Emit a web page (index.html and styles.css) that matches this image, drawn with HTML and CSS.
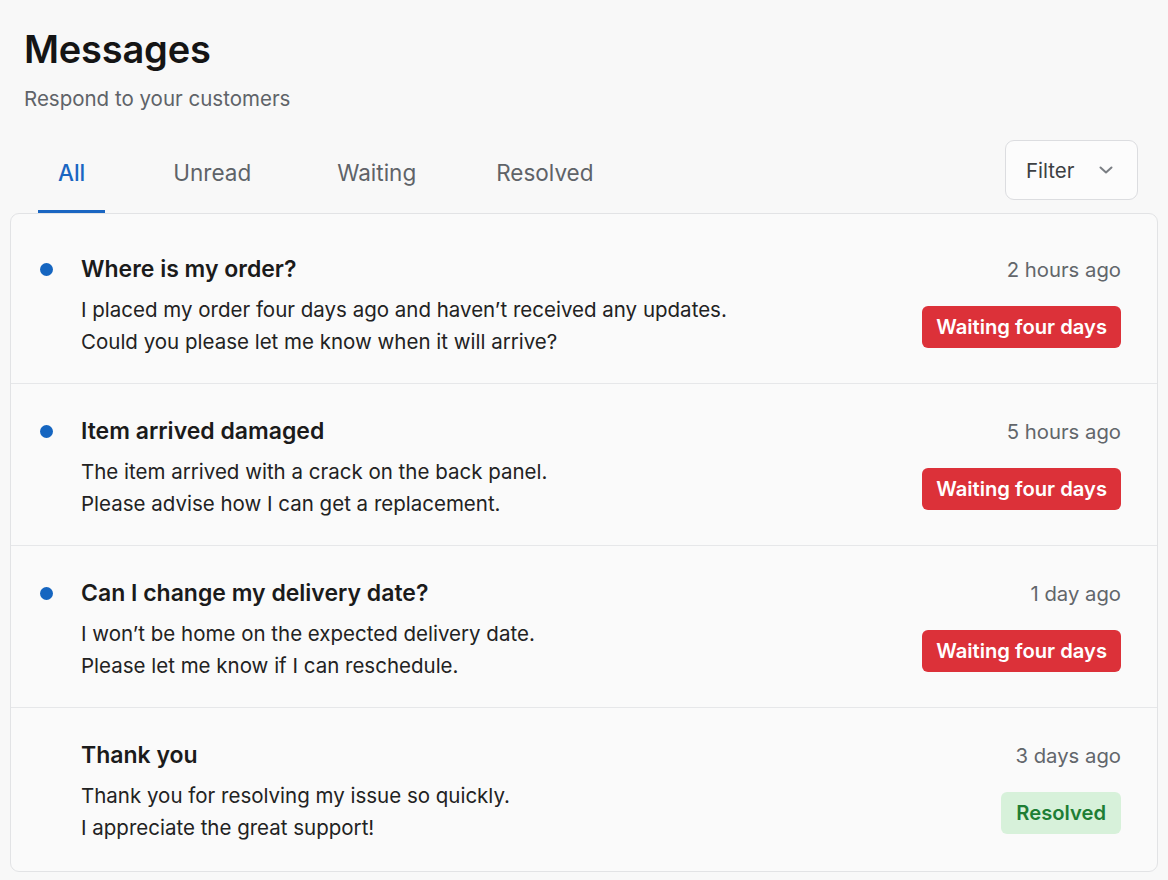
FILE: index.html
```
<!DOCTYPE html>
<html>
<head>
<meta charset="utf-8">
<link rel="stylesheet" href="styles.css">
</head>
<body>
<div class="page">
  <header class="head">
    <h1 class="title">Messages</h1>
    <p class="subtitle">Respond to your customers</p>
  </header>
  <div class="toolbar">
    <nav class="tabs">
      <a class="tab active">All</a>
      <a class="tab">Unread</a>
      <a class="tab">Waiting</a>
      <a class="tab">Resolved</a>
    </nav>
    <button class="filter">Filter
      <svg class="chev" width="16" height="16" viewBox="0 0 16 16"><path d="M2.5 5.5 L8 10.5 L13.5 5.5" fill="none" stroke="#7a7e83" stroke-width="2" stroke-linecap="round" stroke-linejoin="round"/></svg>
    </button>
  </div>
  <div class="card">
    <div class="row">
      <span class="dot"></span>
      <div class="main">
        <div class="subject">Where is my order?</div>
        <div class="body">I placed my order four days ago and haven’t received any updates.<br>Could you please let me know when it will arrive?</div>
      </div>
      <div class="side">
        <div class="time">2 hours ago</div>
        <span class="badge waiting">Waiting four days</span>
      </div>
    </div>
    <div class="row">
      <span class="dot"></span>
      <div class="main">
        <div class="subject">Item arrived damaged</div>
        <div class="body">The item arrived with a crack on the back panel.<br>Please advise how I can get a replacement.</div>
      </div>
      <div class="side">
        <div class="time">5 hours ago</div>
        <span class="badge waiting">Waiting four days</span>
      </div>
    </div>
    <div class="row">
      <span class="dot"></span>
      <div class="main">
        <div class="subject">Can I change my delivery date?</div>
        <div class="body">I won’t be home on the expected delivery date.<br>Please let me know if I can reschedule.</div>
      </div>
      <div class="side">
        <div class="time">1 day ago</div>
        <span class="badge waiting">Waiting four days</span>
      </div>
    </div>
    <div class="row">
      <span class="dot none"></span>
      <div class="main">
        <div class="subject">Thank you</div>
        <div class="body">Thank you for resolving my issue so quickly.<br>I appreciate the great support!</div>
      </div>
      <div class="side">
        <div class="time">3 days ago</div>
        <span class="badge resolved">Resolved</span>
      </div>
    </div>
  </div>
</div>
</body>
</html>
```
FILE: styles.css
```
* { box-sizing: border-box; }
html, body { margin: 0; padding: 0; }
body {
  background: #f8f8f8;
  font-family: "Inter", "Open Sans", sans-serif;
  color: #1f1f1f;
}
.page { padding: 0 10px 0 10px; width: 1168px; }
.head { padding: 26px 0 0 14px; }
.title {
  margin: 0;
  font-size: 38px;
  font-weight: 600;
  line-height: 46px;
  color: #151515;
  letter-spacing: -0.2px;
}
.subtitle {
  margin: 13px 0 0 0;
  font-size: 20.5px;
  line-height: 28px;
  color: #5f6368;
}
.toolbar {
  display: flex;
  justify-content: space-between;
  align-items: flex-start;
  margin-top: 27px;
  padding-right: 20px;
}
.tabs { display: flex; padding-left: 28px; }
.tab {
  font-size: 22.5px;
  line-height: 30px;
  color: #5f6368;
  padding: 18px 20px 22px 20px;
  border-bottom: 3px solid transparent;
  margin-right: 46px;
}
.tab:first-child { margin-right: 48px; }
.tab:nth-child(3) { margin-right: 40px; }
.tab.active { color: #1a66c2; border-bottom-color: #1a66c2; font-weight: 500; }
.filter {
  width: 133px;
  height: 60px;
  border: 1px solid #dcdde0;
  border-radius: 9px;
  background: #fcfcfc;
  font-family: inherit;
  font-size: 20.5px;
  color: #3c4043;
  display: flex;
  align-items: center;
  justify-content: space-between;
  padding: 0 23px 0 20px;
}
.card {
  background: #fafafa;
  border: 1px solid #e2e3e5;
  border-radius: 9px;
  padding: 8px 0 2px 0;
  width: 1148px;
}
.row {
  display: flex;
  align-items: flex-start;
  padding: 32px 36px 25px 29px;
  border-top: 1px solid #e6e7e9;
}
.row:first-child { border-top: none; }
.dot {
  width: 13px; height: 13px; border-radius: 50%;
  background: #1565c0;
  margin-top: 9px;
  margin-right: 28px;
  flex: none;
}
.dot.none { background: transparent; }
.main { flex: 1; }
.subject {
  font-size: 23px;
  line-height: 30px;
  font-weight: 600;
  color: #1b1b1b;
}
.body {
  margin-top: 10px;
  font-size: 20.5px;
  line-height: 32px;
  color: #222;
}
.side {
  display: flex;
  flex-direction: column;
  align-items: flex-end;
}
.time {
  font-size: 20.3px;
  line-height: 30px;
  color: #62666b;
  margin-top: 1px;
}
.badge {
  margin-top: 21px;
  height: 42px;
  line-height: 42px;
  padding: 0 14px;
  border-radius: 6px;
  font-size: 20.2px;
  font-weight: 600;
}
.badge.waiting { background: #dc3139; color: #fff; }
.badge.resolved { background: #d7f1da; color: #1e7e35; padding: 0 15px; }
```
